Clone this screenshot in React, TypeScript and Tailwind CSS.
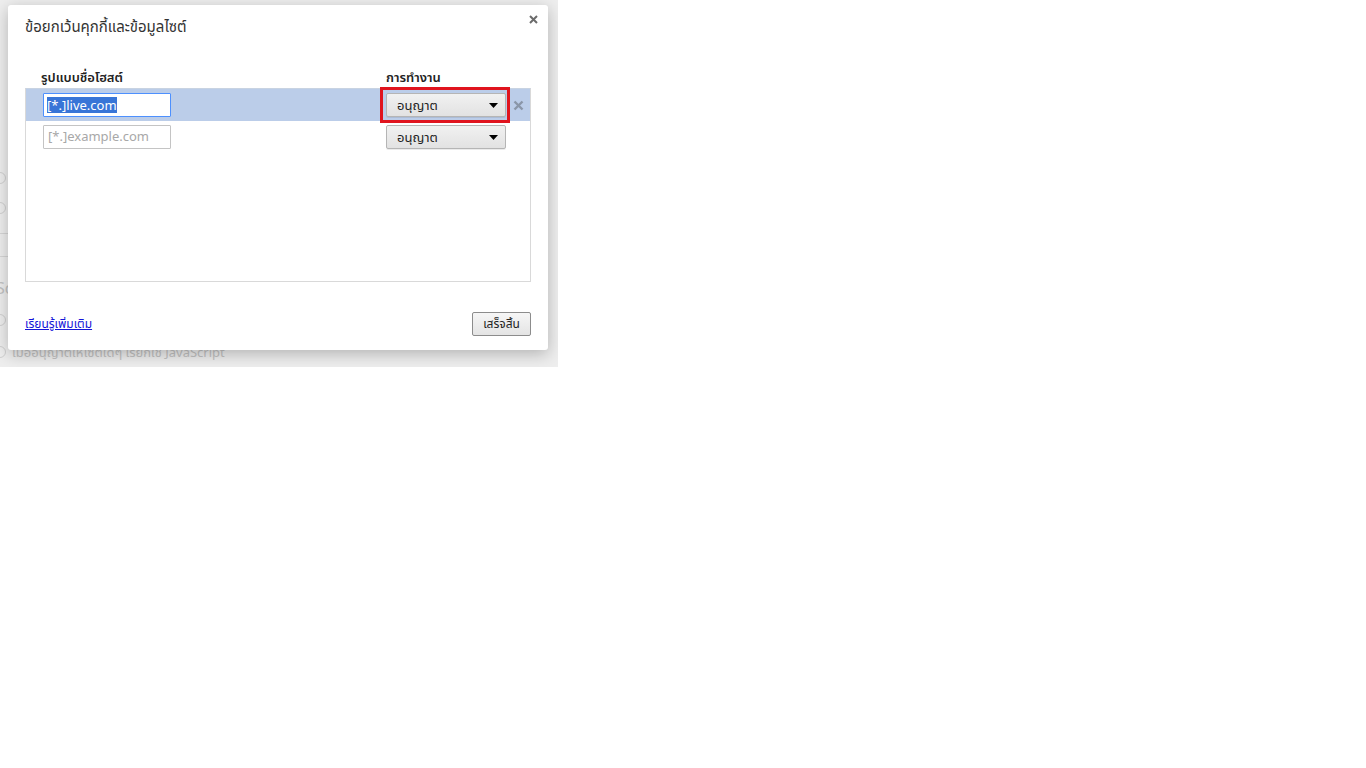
import React from "react";

const font = { fontFamily: '"Noto Sans", "Noto Sans Thai", Tahoma, sans-serif' };

function Arrow() {
  return (
    <svg width="9" height="5" viewBox="0 0 9 5" className="block">
      <path d="M0 0 H9 L4.5 5 Z" fill="#000" />
    </svg>
  );
}

function RemoveX() {
  return (
    <svg width="11" height="11" viewBox="0 0 11 11" className="block">
      <path d="M1.5 1.5 L9.5 9.5 M9.5 1.5 L1.5 9.5" stroke="#8a96a8" strokeWidth="2.4" strokeLinecap="butt" />
    </svg>
  );
}

function Select() {
  return (
    <div className="w-[120px] h-[24px] flex items-center justify-between pl-[10px] pr-[7px] rounded-[2px] border border-[#b5b5b5] bg-gradient-to-b from-[#f1f1f1] to-[#e2e2e2] shadow-[0_1px_0_rgba(0,0,0,0.08)] text-[13px] text-[#222]">
      <span className="leading-none">อนุญาต</span>
      <Arrow />
    </div>
  );
}

function Radio() {
  return <div className="w-[12px] h-[12px] -ml-[6px] rounded-full border border-[#d0d0d0] shrink-0" />;
}

export default function App() {
  return (
    <div className="w-[1366px] h-[768px] bg-white" style={font}>
      <div className="relative w-[558px] h-[367px] bg-[#eeeeee] overflow-hidden">
        {/* faint page underneath */}
        <div className="flex flex-col pt-[172px] text-[#c2c2c2] text-[13px]">
          <Radio />
          <div className="mt-[18px]"><Radio /></div>
          <div className="mt-[19px] w-[30px] h-[24px] -ml-[20px] border border-[#d6d6d6]" />
          <div className="mt-[20px] -ml-[4px] text-[16px] leading-[22px]">Sc</div>
          <div className="mt-[15px]"><Radio /></div>
          <div className="mt-[18px] flex items-center gap-[6px]">
            <Radio />
            <span className="leading-[16px]">เมื่ออนุญาตให้ไซต์ใดๆ เรียกใช้ JavaScript</span>
          </div>
        </div>

        {/* dialog */}
        <div className="absolute left-[8px] top-[5px] w-[540px] h-[345px] bg-white rounded-[3px] shadow-[0_4px_16px_rgba(0,0,0,0.25)] flex flex-col">
          <div className="flex items-start justify-between pl-[17px] pr-[10px] pt-[11px]">
            <div className="text-[15px] text-[#333] leading-[20px]">ข้อยกเว้นคุกกี้และข้อมูลไซต์</div>
            <svg width="9" height="9" viewBox="0 0 9 9" className="-mt-[1px]">
              <path d="M1 1 L8 8 M8 1 L1 8" stroke="#6b6b6b" strokeWidth="2" />
            </svg>
          </div>

          <div className="flex pl-[33px] mt-[32px] text-[13px] font-semibold text-[#222] leading-[18px]">
            <div className="w-[345px]">รูปแบบชื่อโฮสต์</div>
            <div>การทำงาน</div>
          </div>

          <div className="ml-[17px] mr-[17px] mt-[2px] h-[194px] border border-[#d9d9d9] border-t-[#c8d3e2] flex flex-col">
            <div className="h-[32px] bg-[#bbcde9] flex items-center pl-[17px] relative">
              <div className="w-[128px] h-[24px] bg-white border border-[#4d90fe] rounded-[1px] flex items-center pl-[3px] text-[13px]">
                <span className="bg-[#3875d7] text-white leading-[16px]">[*.]live.com</span>
              </div>
              <div className="ml-[215px] relative">
                <Select />
                <div className="absolute -left-[6px] -top-[6px] w-[130px] h-[36px] border-[3px] border-[#e0141e]" />
              </div>
              <div className="ml-[7px]">
                <RemoveX />
              </div>
            </div>
            <div className="h-[32px] flex items-center pl-[17px]">
              <div className="w-[128px] h-[24px] bg-white border border-[#c4c4c4] rounded-[1px] flex items-center pl-[4px] text-[13px] text-[#a8a8a8]">
                [*.]example.com
              </div>
              <div className="ml-[215px]">
                <Select />
              </div>
            </div>
          </div>

          <div className="flex items-center justify-between pl-[17px] pr-[17px] mt-[30px]">
            <a className="text-[12px] text-[#1515d8] underline leading-[16px]">เรียนรู้เพิ่มเติม</a>
            <div className="w-[59px] h-[24px] flex items-center justify-center rounded-[2px] border border-[#8c8c8c] bg-gradient-to-b from-[#f6f6f6] to-[#e4e4e4] text-[12px] text-[#222]">
              เสร็จสิ้น
            </div>
          </div>
        </div>
      </div>
    </div>
  );
}
